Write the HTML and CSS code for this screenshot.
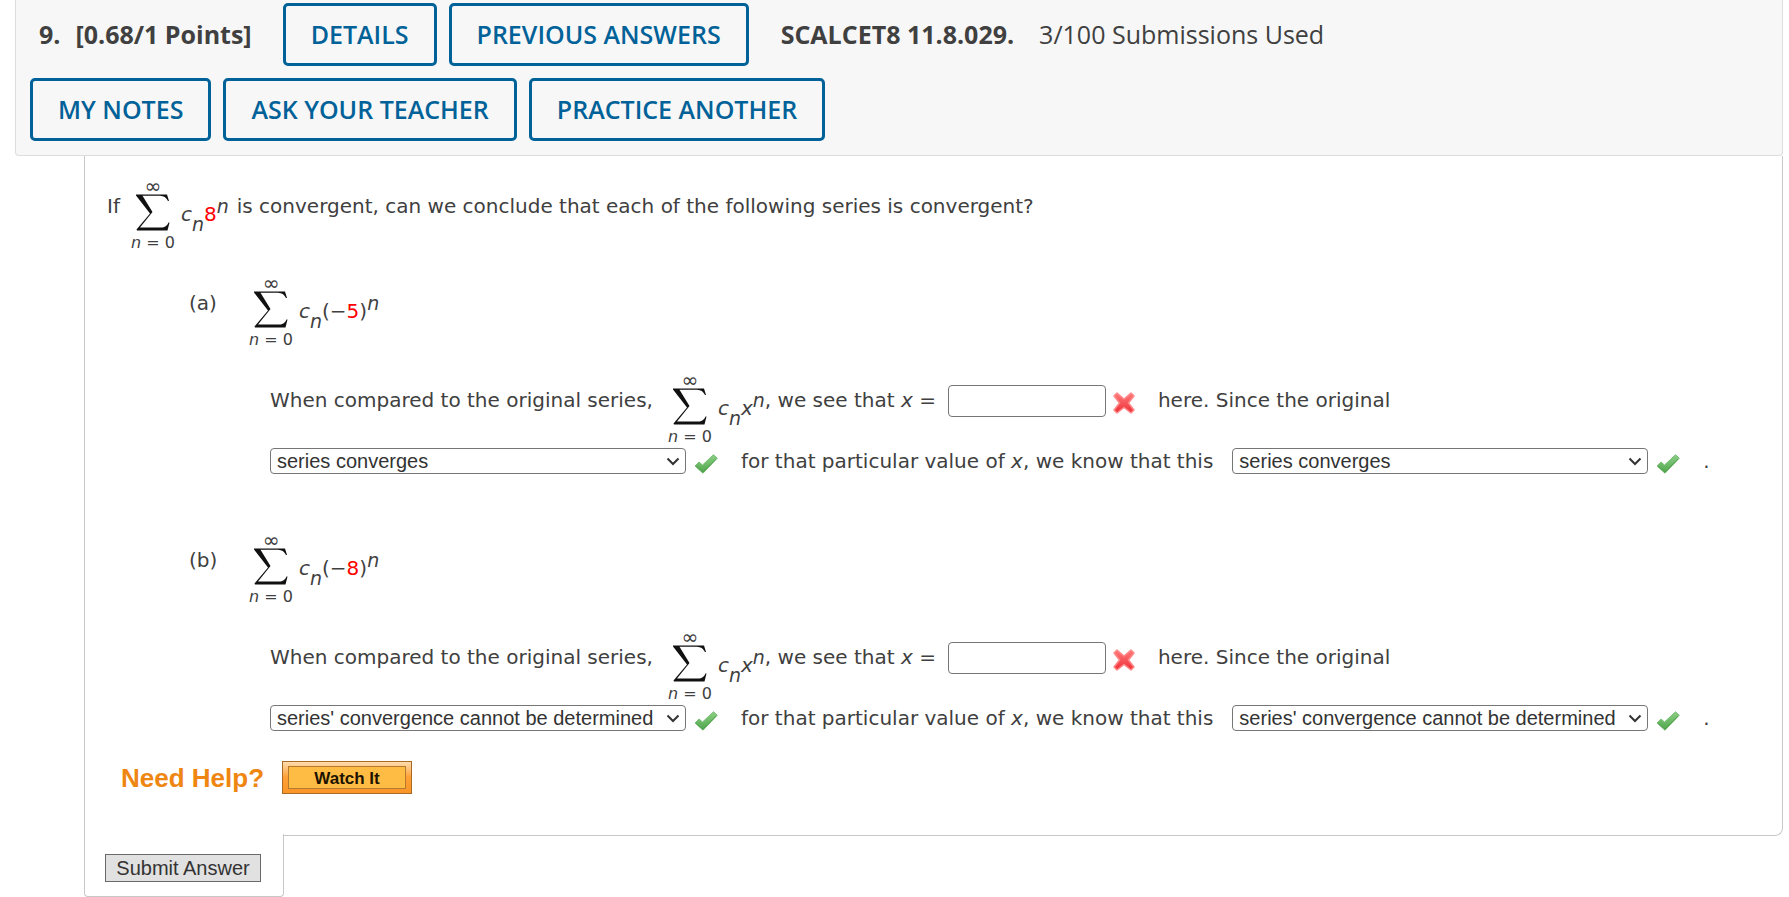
FILE: index.html
```html
<!DOCTYPE html>
<html lang="en">
<head>
<meta charset="utf-8">
<title>Question 9</title>
<link rel="stylesheet" href="styles.css">
</head>
<body>
<svg class="defs" aria-hidden="true">
  <defs>
    <linearGradient id="green" x1="0" y1="0" x2="0" y2="1"><stop offset="0" stop-color="#8ccf86"/><stop offset="1" stop-color="#4fa64b"/></linearGradient>
    <linearGradient id="red" x1="0" y1="0" x2="0" y2="1"><stop offset="0" stop-color="#ff7b7b"/><stop offset="1" stop-color="#ee2f38"/></linearGradient>
    <symbol id="sigma" viewBox="0 0 34 37">
      <path d="M0 0.500H31L33 7L32 7C30 3.500 28 1.800 24 1.700H6.500L16.500 18L4 33.500H25C29 33.500 31 32 32.500 28.500H33.500L31.500 36.500H1L0.500 35.500L14 19.500L0 1.500Z" fill="#111"/>
    </symbol>
    <symbol id="check" viewBox="0 0 24 20">
      <path d="M1 12L5 8L8.500 11L19.500 0.800L23.300 4.200L9 19.200Z" fill="url(#green)" stroke="#79bd75" stroke-width="1" stroke-linejoin="round"/>
      <path d="M2.500 12.500L9 18.400L22 5" fill="none" stroke="#479243" stroke-width="1" opacity=".6"/>
    </symbol>
    <symbol id="cross" viewBox="0 0 22 22">
      <path d="M4 1L11 7L18 1L21 4L15.500 11L21 18L18 21L11 15.500L4 21L1 18L6.500 11L1 4Z" fill="url(#red)" stroke="#ff8a8a" stroke-width="1.500" stroke-linejoin="round"/>
    </symbol>
  </defs>
</svg>

<header class="question-header">
  <div class="header-row">
    <span class="number">9.</span>
    <span class="points">[0.68/1 Points]</span>
    <button class="action" type="button">DETAILS</button>
    <button class="action" type="button">PREVIOUS ANSWERS</button>
    <strong class="code">SCALCET8 11.8.029.</strong>
    <span class="submissions">3/100 Submissions Used</span>
  </div>
  <div class="header-row">
    <button class="action" type="button">MY NOTES</button>
    <button class="action" type="button">ASK YOUR TEACHER</button>
    <button class="action" type="button">PRACTICE ANOTHER</button>
  </div>
</header>

<main class="question">
  <div class="line">
    <span class="text intro">If</span>
    <span class="sum"><span class="limit">∞</span><svg class="sigma"><use href="#sigma"/></svg><span><i>n</i> = 0</span></span>
    <span class="term"><i>c</i><sub>n</sub><b>8</b><sup>n</sup></span>
    <span class="text after">is convergent, can we conclude that each of the following series is convergent?</span>
  </div>

  <section class="part">
    <span class="label">(a)</span>
    <div class="part-body">
      <div class="line">
        <span class="sum"><span class="limit">∞</span><svg class="sigma"><use href="#sigma"/></svg><span><i>n</i> = 0</span></span>
        <span class="term"><i>c</i><sub>n</sub>(−<b>5</b>)<sup>n</sup></span>
      </div>
      <div class="answer">
        <div class="line">
          <label class="text lead" for="xa">When compared to the original series,</label>
          <span class="sum"><span class="limit">∞</span><svg class="sigma"><use href="#sigma"/></svg><span><i>n</i> = 0</span></span>
          <span class="term"><i>c</i><sub>n</sub><i>x</i><sup>n</sup></span>
          <span class="text">, we see that <i>x</i> =</span>
          <input class="blank" id="xa" type="text">
          <svg class="cross" role="img" aria-label="incorrect"><use href="#cross"/></svg>
          <span class="text">here. Since the original</span>
        </div>
        <div class="choices">
          <select class="choice" aria-label="The original"><option>series converges</option><option>series' convergence cannot be determined</option></select>
          <svg class="check" role="img" aria-label="correct"><use href="#check"/></svg>
          <label class="choice-text" for="sa">for that particular value of <i>x</i>, we know that this</label>
          <select class="choice" id="sa"><option>series converges</option><option>series' convergence cannot be determined</option></select>
          <svg class="check" role="img" aria-label="correct"><use href="#check"/></svg>
          <span>.</span>
        </div>
      </div>
    </div>
  </section>

  <section class="part">
    <span class="label">(b)</span>
    <div class="part-body">
      <div class="line">
        <span class="sum"><span class="limit">∞</span><svg class="sigma"><use href="#sigma"/></svg><span><i>n</i> = 0</span></span>
        <span class="term"><i>c</i><sub>n</sub>(−<b>8</b>)<sup>n</sup></span>
      </div>
      <div class="answer">
        <div class="line">
          <label class="text lead" for="xb">When compared to the original series,</label>
          <span class="sum"><span class="limit">∞</span><svg class="sigma"><use href="#sigma"/></svg><span><i>n</i> = 0</span></span>
          <span class="term"><i>c</i><sub>n</sub><i>x</i><sup>n</sup></span>
          <span class="text">, we see that <i>x</i> =</span>
          <input class="blank" id="xb" type="text">
          <svg class="cross" role="img" aria-label="incorrect"><use href="#cross"/></svg>
          <span class="text">here. Since the original</span>
        </div>
        <div class="choices">
          <select class="choice" aria-label="The original"><option>series' convergence cannot be determined</option><option>series converges</option></select>
          <svg class="check" role="img" aria-label="correct"><use href="#check"/></svg>
          <label class="choice-text" for="sb">for that particular value of <i>x</i>, we know that this</label>
          <select class="choice" id="sb"><option>series' convergence cannot be determined</option><option>series converges</option></select>
          <svg class="check" role="img" aria-label="correct"><use href="#check"/></svg>
          <span>.</span>
        </div>
      </div>
    </div>
  </section>

  <div class="help">
    <span class="help-title">Need Help?</span>
    <button class="watch" type="button"><span>Watch It</span></button>
  </div>
</main>

<div class="submit-tab"><button class="submit" type="button">Submit Answer</button></div>
</body>
</html>
```
FILE: styles.css
```css
* { box-sizing: border-box; }

body {
  margin: 0;
  height: 100vh;
  overflow: hidden;
  background: #fff;
  color: #404040;
  font: 20px/24px "DejaVu Sans", Verdana, sans-serif;
}

.defs { position: absolute; width: 0; height: 0; }
svg { display: block; flex: none; }

.question-header {
  display: grid;
  gap: 12px;
  margin: 0 6px 0 15px;
  padding: 3px 14px 14px;
  background: #f7f7f7;
  border: 1px solid #ddd;
  border-top: 0;
  border-radius: 0 0 4px 4px;
  font: 25px/32px "Open Sans", sans-serif;
}

.header-row { display: flex; flex-wrap: wrap; align-items: center; gap: 12px; }
.number, .points, .code { font-weight: 700; }
.number, .points, .code, .submissions { padding-bottom: 2px; }
.number { padding-left: 9px; }
.points { margin: 0 19px 0 3px; }
.code { margin: 0 13px 0 20px; }

.action {
  height: 63px;
  padding: 0 25px 2px;
  background: #f7f7f7;
  border: 3px solid #006298;
  border-radius: 5px;
  color: #006298;
  font: 600 25px/32px "Open Sans", sans-serif;
}

.question {
  margin: 0 6px 0 84px;
  padding: 22px 22px 41px;
  border: 1px solid #c8c8c8;
  border-top: 0;
  border-radius: 0 0 8px 0;
}

.line { display: flex; align-items: flex-start; min-height: 74px; }
.text { margin-top: 16px; white-space: nowrap; }
.text.intro { margin-right: 10px; }
.text.lead { margin-right: 14px; }
.text.after { margin-left: 8px; }

.sum {
  display: flex;
  flex-direction: column;
  align-items: center;
  font-size: 16px;
  line-height: 17px;
  width: 46px;
  white-space: nowrap;
}
.limit { font-size: 20px; line-height: 16px; }
.sigma { width: 34px; height: 37px; margin-bottom: 3px; }

.term { margin: 24px 0 0 5px; white-space: nowrap; }
.term b { color: #f00; font-weight: 400; }
sub, sup { font-size: 19px; font-style: italic; line-height: 0; vertical-align: baseline; position: relative; }
sub { top: 10px; }
sup { top: -8px; }

.part { display: flex; padding-left: 82px; margin-top: 23px; }
.part + .part { margin-top: 58px; }
.label { width: 59px; margin-top: 16px; }
.answer { padding: 23px 0 0 22px; }

.blank {
  width: 158px;
  height: 32px;
  margin: 13px 7px 0 12px;
  border: 1px solid #767676;
  border-radius: 4px;
  font-size: 20px;
}
.cross { width: 22px; height: 22px; margin: 20px 23px 0 0; }

.choices { display: flex; align-items: center; margin-top: 2px; white-space: nowrap; }
.choice {
  appearance: none;
  width: 416px;
  height: 26px;
  padding: 0 24px 0 6px;
  background: #fff url("data:image/svg+xml,%3Csvg xmlns='http://www.w3.org/2000/svg' width='14' height='9'%3E%3Cpath d='M1.500 1.500L7 7L12.500 1.500' fill='none' stroke='%23333' stroke-width='2'/%3E%3C/svg%3E") no-repeat right 5px center;
  border: 1px solid #767676;
  border-radius: 4px;
  color: #333;
  font: 20px/24px "Liberation Sans", Arial, sans-serif;
}
.check { width: 24px; height: 20px; margin: 6px 23px 0 8px; }
.choice-text { margin-right: 19px; }

.help { display: flex; align-items: center; gap: 18px; margin: 30px 0 0 14px; }
.help-title { color: #ee8611; font: 700 26px/32px "Liberation Sans", Arial, sans-serif; }
.watch {
  display: flex;
  width: 130px;
  height: 33px;
  padding: 4px 5px;
  background: linear-gradient(#ffdcae, #ff9f35 50%, #fa9628);
  border: 1px solid #a86a25;
}
.watch span {
  flex: 1;
  background: #ffbc45;
  border: 1px solid #b57a2c;
  color: #1c1400;
  font: 700 17px/23px "Liberation Sans", Arial, sans-serif;
}

.submit-tab {
  position: relative;
  width: 200px;
  margin: -2px 0 0 84px;
  padding: 20px 20px 14px;
  background: #fff;
  border: 1px solid #c8c8c8;
  border-top: 0;
  border-radius: 0 0 4px 4px;
}
.submit {
  display: block;
  width: 156px;
  height: 28px;
  padding: 0;
  background: #e1e1e1;
  border: 1px solid #6a6a6a;
  color: #333;
  font: 20px/24px "Liberation Sans", Arial, sans-serif;
}
```
